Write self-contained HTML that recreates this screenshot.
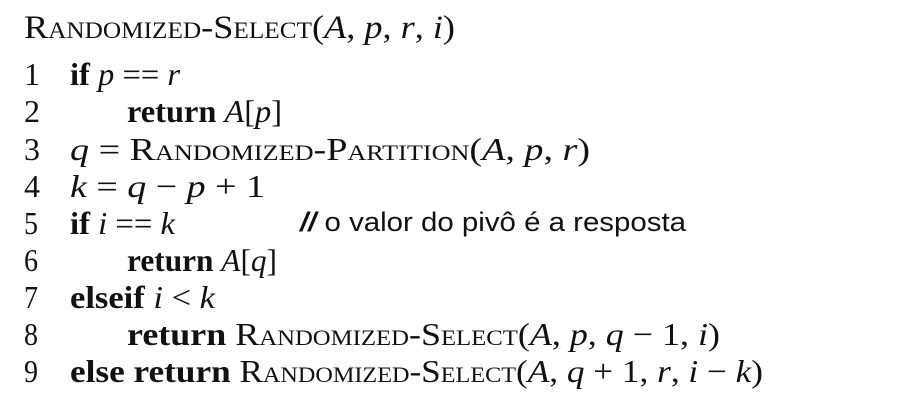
<!DOCTYPE html>
<html><head><meta charset="utf-8"><style>
body{margin:0;width:909px;height:400px;background:#fff;position:relative;overflow:hidden;font-family:"Liberation Serif",serif;color:#111;}
.l{position:absolute;font-size:32px;white-space:pre;line-height:1;transform-origin:0 0;}
.sc{font-variant:small-caps}
i{font-style:italic}
b{font-weight:bold}
.o{margin:0 8px}
.cm{font-family:"Liberation Sans",sans-serif;font-size:27px;}
</style></head><body>
<div class="l" data-w="431" style="left:24px;top:12px;font-size:33px"><span class="sc">Randomized-Select</span>(<i>A</i>, <i>p</i>, <i>r</i>, <i>i</i>)</div>

<div class="l" style="left:24px;top:58px">1</div>
<div class="l" data-w="110" style="left:70px;top:58px"><b>if</b> <i>p</i> == <i>r</i></div>

<div class="l" style="left:24px;top:95px">2</div>
<div class="l" data-w="155" style="left:127px;top:95px"><b>return</b> <i>A</i>[<i>p</i>]</div>

<div class="l" style="left:24px;top:133px">3</div>
<div class="l" data-w="520" style="left:70px;top:133px"><i>q</i><span class="o">=</span><span class="sc">Randomized-Partition</span>(<i>A</i>, <i>p</i>, <i>r</i>)</div>

<div class="l" style="left:24px;top:170px">4</div>
<div class="l" data-w="195" style="left:70px;top:170px"><i>k</i><span class="o">=</span><i>q</i><span class="o">−</span><i>p</i><span class="o">+</span>1</div>

<div class="l" data-w="14" style="left:24px;top:207px">5</div>
<div class="l" data-w="105" style="left:70px;top:207px"><b>if</b> <i>i</i> == <i>k</i></div>
<div class="l cm" data-w="386" style="left:300px;top:209px"><b><i>//</i></b> o valor do pivô é a resposta</div>

<div class="l" data-w="14" style="left:24px;top:244px">6</div>
<div class="l" data-w="150" style="left:127px;top:244px"><b>return</b> <i>A</i>[<i>q</i>]</div>

<div class="l" data-w="14" style="left:24px;top:281px">7</div>
<div class="l" data-w="145" style="left:70px;top:281px"><b>elseif</b><i> i</i><span class="o">&lt;</span><i>k</i></div>

<div class="l" data-w="14" style="left:24px;top:318px">8</div>
<div class="l" data-w="593" style="left:127px;top:318px"><b>return</b> <span class="sc">Randomized-Select</span>(<i>A</i>, <i>p</i>, <i>q</i><span class="o">−</span>1, <i>i</i>)</div>

<div class="l" data-w="14" style="left:24px;top:355px">9</div>
<div class="l" data-w="693" style="left:70px;top:355px"><b>else return</b> <span class="sc">Randomized-Select</span>(<i>A</i>, <i>q</i><span class="o">+</span>1, <i>r</i>, <i>i</i><span class="o">−</span><i>k</i>)</div>
<script>
document.querySelectorAll('[data-w]').forEach(function(e){var w=e.getBoundingClientRect().width;if(w>0)e.style.transform='scaleX('+(parseFloat(e.getAttribute('data-w'))/w)+')';});
</script>
</body></html>
